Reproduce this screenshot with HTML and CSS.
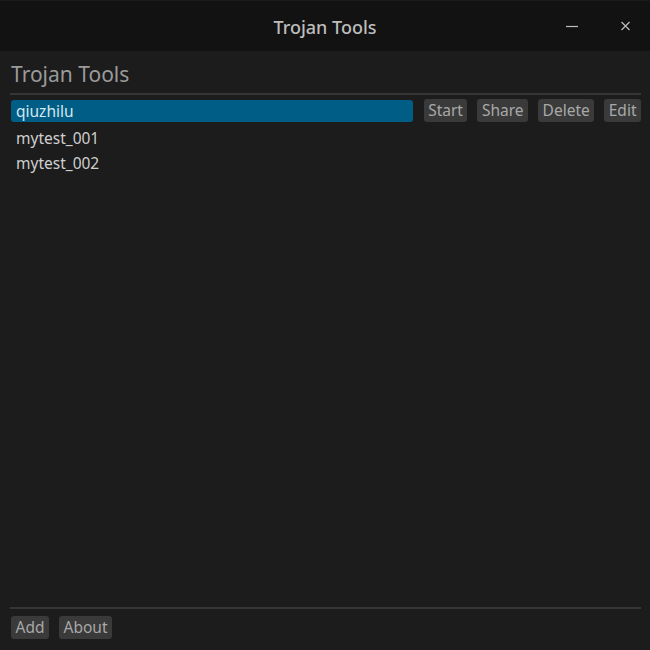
FILE: index.html
```html
<!DOCTYPE html>
<html>
<head>
<meta charset="utf-8">
<link rel="stylesheet" href="styles.css">
</head>
<body>
<div class="window">
  <header class="titlebar">
    <span class="title">Trojan Tools</span>
    <div class="controls">
      <svg class="ctl" width="16" height="16" viewBox="0 0 16 16"><path d="M2 8.5h12" stroke="#bdbdbd" stroke-width="1.2"/></svg>
      <svg class="ctl" width="16" height="16" viewBox="0 0 16 16"><path d="M3.5 4l8 8M11.5 4l-8 8" stroke="#bdbdbd" stroke-width="1.2"/></svg>
    </div>
  </header>
  <main class="content">
    <h1 class="heading">Trojan Tools</h1>
    <div class="sep"></div>
    <div class="list-area">
      <div class="list">
        <div class="row selected">qiuzhilu</div>
        <div class="row">mytest_001</div>
        <div class="row">mytest_002</div>
      </div>
      <div class="actions">
        <button class="btn">Start</button>
        <button class="btn">Share</button>
        <button class="btn">Delete</button>
        <button class="btn">Edit</button>
      </div>
    </div>
    <div class="sep"></div>
    <div class="footer">
      <button class="btn">Add</button>
      <button class="btn">About</button>
    </div>
  </main>
</div>
</body>
</html>
```

FILE: styles.css
```css
html, body {
  margin: 0;
  padding: 0;
  background: #121212;
}
body {
  font-family: "Noto Sans", "Open Sans", sans-serif;
  color: #d0d0d0;
}
.window {
  width: 650px;
  height: 650px;
  display: flex;
  flex-direction: column;
}
.titlebar {
  height: 51px;
  flex: none;
  background: #121212;
  display: flex;
  align-items: center;
  justify-content: center;
  position: relative;
  border-top: 1px solid #1a1a1a;
  box-sizing: border-box;
}
.title {
  font-size: 18px;
  color: #bdbdbd;
  font-weight: 500;
  margin-top: 2px;
}
.controls {
  position: absolute;
  right: 16px;
  top: 17px;
  display: flex;
  gap: 38px;
}
.ctl { display: block; }
.content {
  flex: 1;
  background: #1c1c1c;
  padding: 0 9px 0 10px;
  display: flex;
  flex-direction: column;
}
.heading {
  margin: 8px 0 0 1px;
  font-size: 21px;
  font-weight: 400;
  color: #9a9a9a;
  height: 34px;
  line-height: 30px;
}
.sep {
  height: 2px;
  background: #363636;
  flex: none;
}
.list-area {
  flex: 1;
  display: flex;
  padding-top: 5px;
  gap: 11px;
}
.list {
  flex: 1;
  display: flex;
  flex-direction: column;
}
.row {
  height: 25px;
  line-height: 25px;
  padding-left: 5px;
  font-size: 15.5px;
  color: #cfcfcf;
  border-radius: 3px;
  margin-left: 1px;
}
.selected {
  height: 22px;
  line-height: 22px;
  margin-bottom: 4px;
  background: #005e86;
  color: #d6e6ee;
}
.actions {
  display: flex;
  gap: 10px;
  align-items: flex-start;
  height: 24px;
  margin-top: -1px;
}
.btn {
  font-family: inherit;
  font-size: 15.5px;
  color: #a8a8a8;
  background: #3a3a3a;
  border: none;
  border-radius: 3px;
  height: 23px;
  padding: 0 4.5px;
  line-height: 23px;
  margin: 0;
}
.footer {
  display: flex;
  gap: 10px;
  padding: 7px 0 11px 1px;
}
```
